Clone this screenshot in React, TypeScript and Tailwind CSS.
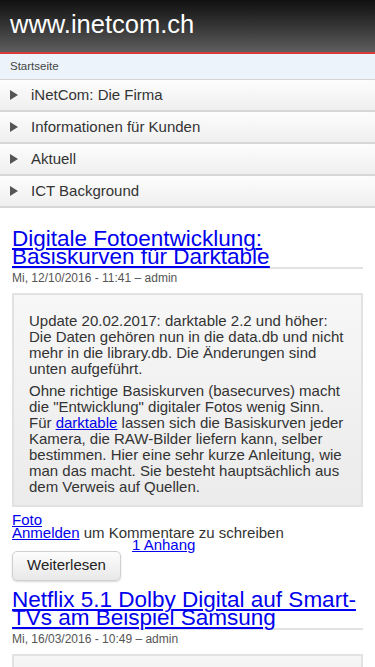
import React from "react";

const font = { fontFamily: '"Liberation Sans", Arial, sans-serif' };

function Tri() {
  return (
    <svg width="8" height="10" viewBox="0 0 8 10" className="shrink-0">
      <polygon points="0,0 8,5 0,10" fill="#555" />
    </svg>
  );
}

const menu = ["iNetCom: Die Firma", "Informationen für Kunden", "Aktuell", "ICT Background"];

export default function App() {
  return (
    <div className="w-[375px] h-[667px] overflow-hidden bg-white text-[#333]" style={font}>
      <div className="h-[52px] bg-gradient-to-b from-[#111111] to-[#5e5e5e] flex items-center px-[10px] pb-[3px]">
        <span className="text-white text-[25.5px] leading-none">www.inetcom.ch</span>
      </div>
      <div className="h-[2px] bg-[#d83a3a]" />
      <div className="h-[26px] bg-[#ecf3fa] border-b border-[#d4d4d4] flex items-center px-[10px] text-[11.5px] text-[#444]">
        Startseite
      </div>
      {menu.map((m) => (
        <div
          key={m}
          className="h-[32px] border-b-2 border-[#d6d6d6] bg-gradient-to-b from-[#fdfdfd] to-[#efefef] flex items-center pl-[10px] gap-[13px] text-[15px] text-[#333]"
        >
          <Tri />
          <span>{m}</span>
        </div>
      ))}
      <div className="px-[12px] pt-[22px]">
        <h2 className="text-[22.5px] leading-[18px] text-[#0000ee] underline border-b-2 border-[#e2e2e2] pb-[1px]">
          <a>Digitale Fotoentwicklung: Basiskurven für Darktable</a>
        </h2>
        <div className="text-[12px] leading-[14px] text-[#555] mt-[2px]">Mi, 12/10/2016 - 11:41 – admin</div>
        <div className="mt-[8px] border-2 border-[#e2e2e2] bg-gradient-to-b from-[#f7f7f7] to-[#ebebeb] px-[15px] pt-[18px] pb-[10px] text-[15px] leading-[16px] text-[#333]">
          <p>
            Update 20.02.2017: darktable 2.2 und höher: Die Daten gehören nun in die data.db und nicht mehr in die library.db. Die Änderungen sind unten aufgeführt.
          </p>
          <p className="mt-[6px]">
            Ohne richtige Basiskurven (basecurves) macht die "Entwicklung" digitaler Fotos wenig Sinn. Für{" "}
            <a className="text-[#0000ee] underline">darktable</a> lassen sich die Basiskurven jeder Kamera, die RAW-Bilder liefern kann, selber bestimmen. Hier eine sehr kurze Anleitung, wie man das macht. Sie besteht hauptsächlich aus dem Verweis auf Quellen.
          </p>
        </div>
        <div className="mt-[7px] text-[15px] leading-[12.5px]">
          <div>
            <a className="text-[#0000ee] underline">Foto</a>
          </div>
          <div>
            <a className="text-[#0000ee] underline">Anmelden</a> um Kommentare zu schreiben
          </div>
          <div className="pl-[120px]">
            <a className="text-[#0000ee] underline">1 Anhang</a>
          </div>
        </div>
        <button className="-mt-[1px] w-[109px] h-[30px] rounded-[5px] border border-[#d0d0d0] bg-gradient-to-b from-[#fdfdfd] to-[#e8e8e8] shadow-[0_1px_2px_rgba(0,0,0,0.15)] text-[15px] text-[#222] block">
          Weiterlesen
        </button>
        <h2 className="mt-[10px] text-[22.5px] leading-[18px] text-[#0000ee] underline border-b-2 border-[#e2e2e2] pb-[1px]">
          <a>Netflix 5.1 Dolby Digital auf Smart-TVs am Beispiel Samsung</a>
        </h2>
        <div className="text-[12px] leading-[14px] text-[#555] mt-[2px]">Mi, 16/03/2016 - 10:49 – admin</div>
        <div className="mt-[8px] h-[40px] border-2 border-[#e2e2e2] bg-gradient-to-b from-[#f7f7f7] to-[#ebebeb]" />
      </div>
    </div>
  );
}
